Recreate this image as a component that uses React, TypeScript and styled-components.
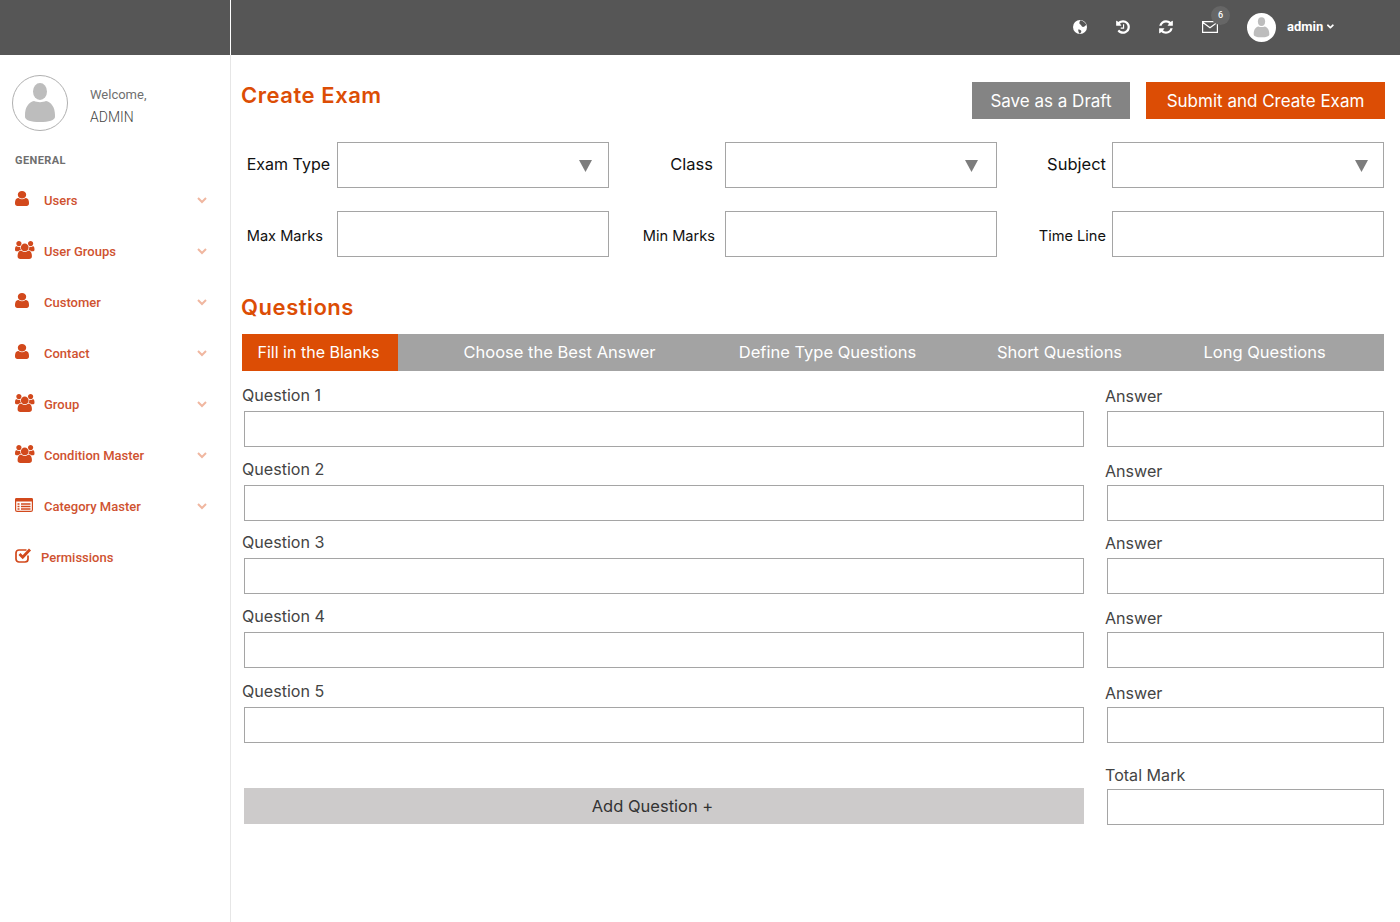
import React from "react";
import styled, { createGlobalStyle } from "styled-components";
import { FaAngleDown } from "react-icons/fa";

const ORANGE = "#dc4d05";
const USER = "M1536 1399q0 109-62.5 187t-150.5 78h-854q-88 0-150.5-78t-62.5-187q0-85 8.5-160.5t31.5-152 58.5-131 94-89 134.5-34.5q131 128 313 128t313-128q76 0 134.5 34.5t94 89 58.5 131 31.5 152 8.5 160.5zm-256-887q0 159-112.5 271.5t-271.5 112.5-271.5-112.5-112.5-271.5 112.5-271.5 271.5-112.5 271.5 112.5 112.5 271.5z";
const USERS = "M593 896q-162 5-265 128h-134q-82 0-138-40.5t-56-118.5q0-353 124-353 6 0 43.5 21t97.5 42.5 119 21.5q67 0 133-23-5 37-5 66 0 139 81 256zm1071 637q0 120-73 189.5t-194 69.5h-874q-121 0-194-69.5t-73-189.5q0-53 3.5-103.5t14-109 26.5-108.5 43-97.5 62-81 85.5-53.5 111.5-20q10 0 43 21.5t73 48 107 48 135 21.5 135-21.5 107-48 73-48 43-21.5q61 0 111.5 20t85.5 53.5 62 81 43 97.5 26.5 108.5 14 109 3.5 103.5zm-1024-1277q0 106-75 181t-181 75-181-75-75-181 75-181 181-75 181 75 75 181zm704 384q0 159-112.5 271.5t-271.5 112.5-271.5-112.5-112.5-271.5 112.5-271.5 271.5-112.5 271.5 112.5 112.5 271.5zm576 225q0 78-56 118.5t-138 40.5h-134q-103-123-265-128 81-117 81-256 0-29-5-66 66 23 133 23 59 0 119-21.5t97.5-42.5 43.5-21q124 0 124 353zm-128-609q0 106-75 181t-181 75-181-75-75-181 75-181 181-75 181 75 75 181z";
const HISTORY = "M1664 896q0 156-61 298t-164 245-245 164-298 61q-172 0-327-72.5t-264-204.5q-7-10-6.5-22.5t8.5-20.5l137-138q10-9 25-9 16 2 23 12 73 95 179 147t225 52q104 0 198.5-40.5t163.5-109.5 109.5-163.5 40.5-198.5-40.5-198.5-109.5-163.5-163.5-109.5-198.5-40.5q-98 0-188 35.5t-160 101.5l137 138q31 30 14 69-17 40-59 40h-448q-26 0-45-19t-19-45v-448q0-42 40-59 39-17 69 14l130 129q107-101 244.5-156.5t284.5-55.5q156 0 298 61t245 164 164 245 61 298zm-640-288v448q0 14-9 23t-23 9h-320q-14 0-23-9t-9-23v-64q0-14 9-23t23-9h224v-352q0-14 9-23t23-9h64q14 0 23 9t9 23z";
const REFRESH = "M1639 1056q0 5-1 7-64 268-268 434.5t-478 166.5q-146 0-282.5-55t-243.5-157l-129 129q-19 19-45 19t-45-19-19-45v-448q0-26 19-45t45-19h448q26 0 45 19t19 45-19 45l-137 137q71 66 161 102t187 36q134 0 250-65t186-179q11-17 53-117 8-23 30-23h192q13 0 22.5 9.5t9.5 22.5zm25-800v448q0 26-19 45t-45 19h-448q-26 0-45-19t-19-45 19-45l138-138q-148-137-349-137-134 0-250 65t-186 179q-11 17-53 117-8 23-30 23h-199q-13 0-22.5-9.5t-9.5-22.5v-7q65-268 270-434.5t480-166.5q146 0 284 55.5t245 156.500l130-129q19-19 45-19t45 19 19 45z";

const Global = createGlobalStyle`
  html, body { margin: 0; padding: 0; background: #fff; }
  body { font-family: "Roboto", "Liberation Sans", sans-serif; }
  * { box-sizing: border-box; }
`;

const Page = styled.div`
  width: 1400px;
  height: 922px;
  overflow: hidden;
  display: flex;
  flex-direction: column;
`;
const TopBar = styled.header`
  height: 55px;
  flex: none;
  background: #565656;
  display: flex;
  align-items: center;
`;
const Brand = styled.div`
  width: 231px;
  height: 100%;
  border-right: 1px solid #fff;
`;
const TopTools = styled.div`
  flex: 1;
  display: flex;
  align-items: center;
  justify-content: flex-end;
  color: #fff;
  padding-right: 64px;
`;
const ToolIcon = styled.svg`
  width: 16px;
  height: 16px;
  margin-right: 27px;
  display: block;
  fill: #fff;
  margin-top: -2px;
`;
const MailIcon = styled.span`
  position: relative;
  width: 16px;
  height: 16px;
  margin: 0 29px 0 1px;
  display: flex;
`;
const Badge = styled.span`
  position: absolute;
  left: 9px;
  top: -14px;
  width: 19px;
  height: 19px;
  border-radius: 50%;
  background: #666;
  color: #fff;
  font: 500 9px/19px "Roboto", sans-serif;
  text-align: center;
`;
const TopAvatar = styled.svg`
  width: 29px;
  height: 29px;
  display: block;
  margin-right: 11px;
`;
const UserName = styled.span`
  font: 700 13px/16px "Roboto", sans-serif;
  color: #fff;
  display: flex;
  align-items: center;
  gap: 2px;
  width: 49px;
  margin-top: -2px;
  white-space: nowrap;
`;
const Main = styled.div`
  flex: 1;
  display: flex;
  min-height: 0;
`;
const Sidebar = styled.aside`
  width: 231px;
  flex: none;
  border-right: 1px solid #e6e6e6;
`;
const Profile = styled.div`
  display: flex;
  align-items: center;
  padding: 20px 0 0 12px;
  gap: 22px;
`;
const ProfileAvatar = styled.svg`
  width: 56px;
  height: 56px;
  display: block;
`;
const ProfileText = styled.div`
  font-size: 14px;
  line-height: 23px;
  padding-top: 5px;
`;
const Welcome = styled.div`
  font-size: 13px;
  color: #6f6f6f;
`;
const AdminName = styled.div`
  font-weight: 300;
  color: #444;
`;
const SectionTitle = styled.h3`
  margin: 22px 0 0 15px;
  font: 700 11px/16px "Roboto", sans-serif;
  letter-spacing: 0.4px;
  color: #6f6f6f;
`;
const Menu = styled.nav`
  margin-top: 6px;
`;
const MenuItem = styled.div`
  height: 51px;
  display: flex;
  align-items: center;
  padding-left: 15px;
  color: #cf5230;
  font-size: 13px;
  font-weight: 500;
`;
const MenuIconBox = styled.span<{ $w: number }>`
  width: ${(p) => p.$w}px;
  flex: none;
  display: flex;
  align-items: center;
  height: 20px;
  margin-top: -4px;
`;
const MenuLabel = styled.span`
  flex: 1;
`;
const Chevron = styled.svg`
  width: 10px;
  height: 7px;
  margin-right: 23px;
  flex: none;
`;
const Content = styled.main`
  flex: 1;
  padding: 27px 15px 0 10px;
  font-family: "Inter", "Liberation Sans", sans-serif;
`;
const HeaderRow = styled.div`
  display: flex;
  align-items: flex-start;
`;
const Heading = styled.h1`
  flex: 1;
  margin: 0;
  font-size: 22px;
  font-weight: 600;
  letter-spacing: 0.55px;
  line-height: 26px;
  color: ${ORANGE};
`;
const Button = styled.button<{ $primary?: boolean; $w: number }>`
  width: ${(p) => p.$w}px;
  height: 37px;
  margin-left: 16px;
  border: 0;
  padding: 0;
  color: #fff;
  background: ${(p) => (p.$primary ? ORANGE : "#848484")};
  font: 400 17px "Inter", sans-serif;
`;
const FormGrid = styled.div`
  display: grid;
  grid-template-columns: 96px 272px 116px 272px 115px 272px;
  grid-auto-rows: 46px;
  row-gap: 23px;
  margin-top: 23px;
`;
const FieldLabel = styled.label<{ $gap: number; $size: number; $nudge: number }>`
  display: flex;
  align-items: center;
  justify-content: flex-end;
  padding-right: ${(p) => p.$gap}px;
  padding-top: ${(p) => (p.$nudge > 0 ? p.$nudge : 0)}px;
  padding-bottom: ${(p) => (p.$nudge < 0 ? -p.$nudge : 0)}px;
  font-size: ${(p) => p.$size}px;
  color: #111;
  white-space: nowrap;
`;
const SelectBox = styled.div`
  position: relative;
  border: 1px solid #a5a5a5;
  background: #fff;
`;
const Caret = styled.svg<{ $right: number }>`
  position: absolute;
  right: ${(p) => p.$right}px;
  top: 17px;
  width: 13px;
  height: 12px;
`;
const TextBox = styled.input`
  display: block;
  border: 1px solid #a5a5a5;
  background: #fff;
  padding: 0;
  outline: none;
  width: 100%;
  height: 100%;
`;
const SectionHeading = styled.h2`
  margin: 35px 0 12px;
  font-size: 22px;
  font-weight: 600;
  letter-spacing: 0.55px;
  line-height: 30px;
  color: ${ORANGE};
`;
const Tabs = styled.div`
  margin-left: 1px;
  height: 37px;
  background: #a3a3a3;
  display: grid;
  grid-template-columns: 156px 323px 213px 251px 159px 40px;
  width: 1142px;
`;
const Tab = styled.div<{ $active?: boolean }>`
  display: flex;
  align-items: center;
  justify-content: center;
  color: #fff;
  font-size: ${(p) => (p.$active ? 16 : 16.5)}px;
  padding: ${(p) => (p.$active ? "0 3px 2px 0" : "0 0 2px")};
  white-space: nowrap;
  background: ${(p) => (p.$active ? ORANGE : "transparent")};
`;
const Rows = styled.div`
  margin: 14px 0 0 1px;
`;
const QuestionRow = styled.div<{ $top: number }>`
  display: grid;
  grid-template-columns: 863px 279px;
  margin-top: ${(p) => p.$top}px;
`;
const RowLabel = styled.div<{ $shift?: number; $below?: number }>`
  height: 20px;
  line-height: 20px;
  font-size: 16.1px;
  color: #444;
  margin-top: ${(p) => p.$shift ?? 0}px;
  margin-bottom: ${(p) => p.$below ?? 6 - (p.$shift ?? 0)}px;
`;
const LineInput = styled.input<{ $w: number }>`
  display: block;
  width: ${(p) => p.$w}px;
  height: 36px;
  margin-left: 2px;
  padding: 0;
  outline: none;
  border: 1px solid #a5a5a5;
  background: #fff;
`;
const AddCell = styled.div`
  padding: 23px 0 0 2px;
`;
const AddButton = styled.button`
  display: block;
  width: 840px;
  height: 36px;
  border: 0;
  padding: 0 23px 0 0;
  background: #cdcbcb;
  color: #333;
  font: 400 16.5px "Inter", sans-serif;
`;

const PersonGlyph = ({ fill }: { fill: string }) => (
  <>
    <ellipse cx="28" cy="16.500" rx="7" ry="8.500" fill={fill} />
    <path d="M13 40c0-8 4-13 9-14 3 1.500 9 1.500 12 0 5 1 9 6 9 14v2c0 3-6 5-15 5s-15-2-15-5z" fill={fill} />
  </>
);

type IconKind = "user" | "users" | "list" | "check";
const MenuGlyph = ({ kind }: { kind: IconKind }) => {
  if (kind === "user")
    return (
      <svg width="14" height="15" viewBox="256 128 1280 1536" preserveAspectRatio="none" fill="#d2491c">
        <path d={USER} />
      </svg>
    );
  if (kind === "users")
    return (
      <svg width="19.500" height="18" viewBox="0 0 1920 1792" preserveAspectRatio="none" fill="#d2491c">
        <path d={USERS} />
      </svg>
    );
  if (kind === "list")
    return (
      <svg width="18" height="14" viewBox="0 0 18 14">
        <rect x="0.600" y="0.600" width="16.800" height="12.800" rx="1.500" fill="none" stroke="#d2491c" strokeWidth="1.200" />
        <rect x="0" y="0" width="18" height="3.500" rx="1.500" fill="#d2491c" />
        <path d="M2.500 6h2M6 6h9.500M2.500 8.500h2M6 8.500h9.500M2.500 11h2M6 11h9.500" stroke="#d2491c" strokeWidth="1.300" />
      </svg>
    );
  return (
    <svg width="17" height="15" viewBox="0 0 17 15">
      <path d="M13 7.500v3.500a3 3 0 0 1-3 3H4a3 3 0 0 1-3-3V5a3 3 0 0 1 3-3h7.500" fill="none" stroke="#d2491c" strokeWidth="1.700" />
      <path d="M4.500 6l3.200 3.200L15 1.500" fill="none" stroke="#d2491c" strokeWidth="2.800" />
    </svg>
  );
};

const menu: { label: string; kind: IconKind; w: number; chevron: boolean }[] = [
  { label: "Users", kind: "user", w: 29, chevron: true },
  { label: "User Groups", kind: "users", w: 29, chevron: true },
  { label: "Customer", kind: "user", w: 29, chevron: true },
  { label: "Contact", kind: "user", w: 29, chevron: true },
  { label: "Group", kind: "users", w: 29, chevron: true },
  { label: "Condition Master", kind: "users", w: 29, chevron: true },
  { label: "Category Master", kind: "list", w: 29, chevron: true },
  { label: "Permissions", kind: "check", w: 26, chevron: false },
];

const rows = [
  { top: 0, shift: 1 },
  { top: 12, shift: 2 },
  { top: 11, shift: 1 },
  { top: 12, shift: 2 },
  { top: 13, shift: 2 },
];

const ArrowDown = ({ right }: { right: number }) => (
  <Caret $right={right} viewBox="0 0 13 12">
    <path d="M0 0h13L6.500 12z" fill="#7d7d7d" />
  </Caret>
);

export default function App() {
  return (
    <Page>
      <Global />
      <TopBar>
        <Brand />
        <TopTools>
          <ToolIcon viewBox="0 0 16 16">
            <circle cx="8" cy="8" r="7" />
            <path d="M8.500 1.200c2 .3 4.800 2.300 5.700 4.300-.8 1.500-2.400 2.700-3.800 2.300-1.200-.4-.8-1.400-1.700-2-1-.6-1.500-1.300-1.300-2.300.2-1 .6-1.600 1.100-2.300zM6.200 10.500c1 0 2.500.4 3 1.200.5.900-.4 2.100-1.300 3-.9-.5-1.300-1.500-1.500-2.400-.1-.7-.3-1.300-.2-1.800z" fill="#565656" />
          </ToolIcon>
          <ToolIcon viewBox="0 0 1792 1792"><path d={HISTORY} /></ToolIcon>
          <ToolIcon viewBox="0 0 1792 1792"><path d={REFRESH} /></ToolIcon>
          <MailIcon>
            <svg width="16" height="13" viewBox="0 0 16 13" fill="none" stroke="#fff" strokeWidth="1.200">
              <path d="M.6 1.600h14.800v10.800H.6zM.6 2.200 8 7.800l7.400-5.600" />
            </svg>
            <Badge>6</Badge>
          </MailIcon>
          <TopAvatar viewBox="0 0 56 56">
            <circle cx="28" cy="28" r="28" fill="#fff" />
            <PersonGlyph fill="#bdbdbd" />
          </TopAvatar>
          <UserName>admin<FaAngleDown size={11} /></UserName>
        </TopTools>
      </TopBar>
      <Main>
        <Sidebar>
          <Profile>
            <ProfileAvatar viewBox="0 0 56 56">
              <circle cx="28" cy="28" r="27.500" fill="#fff" stroke="#b0b0b0" />
              <PersonGlyph fill="#bdbdbd" />
            </ProfileAvatar>
            <ProfileText>
              <Welcome>Welcome,</Welcome>
              <AdminName>ADMIN</AdminName>
            </ProfileText>
          </Profile>
          <SectionTitle>GENERAL</SectionTitle>
          <Menu>
            {menu.map((m) => (
              <MenuItem key={m.label}>
                <MenuIconBox $w={m.w}><MenuGlyph kind={m.kind} /></MenuIconBox>
                <MenuLabel>{m.label}</MenuLabel>
                {m.chevron && (
                  <Chevron viewBox="0 0 10 7">
                    <path d="M1 1l4 4 4-4" fill="none" stroke="#f0b7a0" strokeWidth="2" />
                  </Chevron>
                )}
              </MenuItem>
            ))}
          </Menu>
        </Sidebar>
        <Content>
          <HeaderRow>
            <Heading>Create Exam</Heading>
            <Button $w={158}>Save as a Draft</Button>
            <Button $w={239} $primary>Submit and Create Exam</Button>
          </HeaderRow>
          <FormGrid>
            <FieldLabel $gap={7} $size={16} $nudge={-2}>Exam Type</FieldLabel>
            <SelectBox><ArrowDown right={16} /></SelectBox>
            <FieldLabel $gap={12} $size={16.500} $nudge={-2}>Class</FieldLabel>
            <SelectBox><ArrowDown right={18} /></SelectBox>
            <FieldLabel $gap={6} $size={16.500} $nudge={-2}>Subject</FieldLabel>
            <SelectBox><ArrowDown right={15} /></SelectBox>
            <FieldLabel $gap={14} $size={14.600} $nudge={4}>Max Marks</FieldLabel>
            <TextBox />
            <FieldLabel $gap={10} $size={14.600} $nudge={4}>Min Marks</FieldLabel>
            <TextBox />
            <FieldLabel $gap={6} $size={14.600} $nudge={4}>Time Line</FieldLabel>
            <TextBox />
          </FormGrid>
          <SectionHeading>Questions</SectionHeading>
          <Tabs>
            <Tab $active>Fill in the Blanks</Tab>
            <Tab>Choose the Best Answer</Tab>
            <Tab>Define Type Questions</Tab>
            <Tab>Short Questions</Tab>
            <Tab>Long Questions</Tab>
          </Tabs>
          <Rows>
            {rows.map((r, i) => (
              <QuestionRow key={i} $top={r.top}>
                <div>
                  <RowLabel>Question {i + 1}</RowLabel>
                  <LineInput $w={840} />
                </div>
                <div>
                  <RowLabel $shift={r.shift}>Answer</RowLabel>
                  <LineInput $w={277} />
                </div>
              </QuestionRow>
            ))}
            <QuestionRow $top={22}>
              <AddCell><AddButton>Add Question +</AddButton></AddCell>
              <div>
                <RowLabel $below={4}>Total Mark</RowLabel>
                <LineInput $w={277} />
              </div>
            </QuestionRow>
          </Rows>
        </Content>
      </Main>
    </Page>
  );
}
